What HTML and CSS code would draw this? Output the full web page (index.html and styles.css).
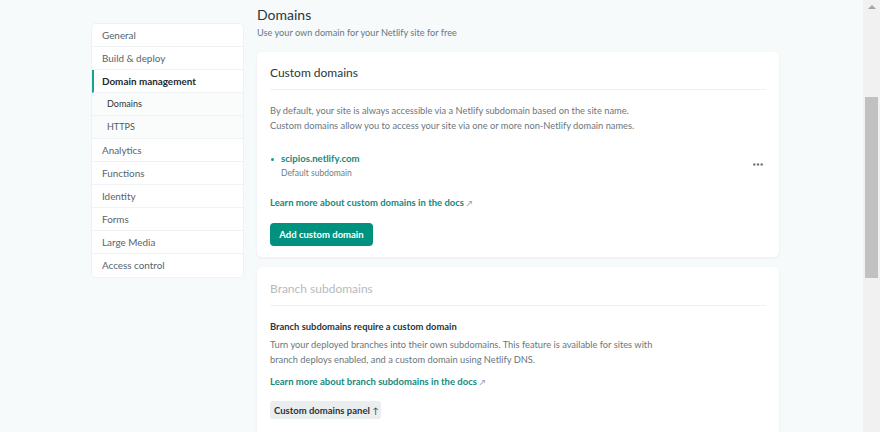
FILE: index.html
```html
<!DOCTYPE html>
<html>
<head>
<meta charset="utf-8">
<link rel="stylesheet" href="styles.css">
</head>
<body>
<div class="page">
  <nav class="sidenav">
    <a class="nav-item">General</a>
    <a class="nav-item">Build &amp; deploy</a>
    <a class="nav-item active">Domain management</a>
    <a class="nav-item sub">Domains</a>
    <a class="nav-item sub light">HTTPS</a>
    <a class="nav-item">Analytics</a>
    <a class="nav-item">Functions</a>
    <a class="nav-item">Identity</a>
    <a class="nav-item">Forms</a>
    <a class="nav-item">Large Media</a>
    <a class="nav-item last">Access control</a>
  </nav>
  <main class="main">
    <h1 class="page-title">Domains</h1>
    <p class="page-sub">Use your own domain for your Netlify site for free</p>

    <section class="card">
      <h2 class="card-title">Custom domains</h2>
      <div class="card-body">
        <p class="text">By default, your site is always accessible via a Netlify subdomain based on the site name.<br>Custom domains allow you to access your site via one or more non-Netlify domain names.</p>
        <div class="domain-row">
          <div class="domain">
            <span class="bullet"></span>
            <div>
              <div class="domain-name">scipios.netlify.com</div>
              <div class="domain-note">Default subdomain</div>
            </div>
          </div>
          <svg class="more" width="10" height="3" viewBox="0 0 10 3"><circle cx="1.3" cy="1.5" r="1.2" fill="#6b757a"/><circle cx="5" cy="1.5" r="1.2" fill="#6b757a"/><circle cx="8.7" cy="1.5" r="1.2" fill="#6b757a"/></svg>
        </div>
        <a class="link">Learn more about custom domains in the docs <span class="arrow">↗</span></a>
        <div><button class="btn-primary">Add custom domain</button></div>
      </div>
    </section>

    <section class="card card-tall">
      <h2 class="card-title muted">Branch subdomains</h2>
      <div class="card-body">
        <h3 class="subhead">Branch subdomains require a custom domain</h3>
        <p class="text">Turn your deployed branches into their own subdomains. This feature is available for sites with<br>branch deploys enabled, and a custom domain using Netlify DNS.</p>
        <a class="link link2">Learn more about branch subdomains in the docs <span class="arrow">↗</span></a>
        <div><button class="btn-secondary">Custom domains panel <span class="up">↑</span></button></div>
      </div>
    </section>
  </main>
</div>
<div class="scrollbar">
  <div class="sb-arrow"></div>
  <div class="sb-thumb"></div>
</div>
</body>
</html>
```
FILE: styles.css
```css
* { box-sizing: border-box; }
html, body { margin: 0; padding: 0; }
body {
  background: #f6fafb;
  font-family: "Lato", "Open Sans", sans-serif;
  color: #2e3a40;
  height: 432px;
  overflow: hidden;
}
.page {
  display: flex;
  align-items: flex-start;
  gap: 14px;
  padding-left: 92px;
  width: 863px;
}
.sidenav {
  margin-top: 24px;
  width: 151px;
  flex-shrink: 0;
  background: #fff;
  border-radius: 4px;
  display: flex;
  flex-direction: column;
  box-shadow: 0 0 0 1px #eef2f3;
}
.nav-item {
  height: 23px;
  line-height: 22px;
  padding-left: 10px;
  font-size: 9.9px;
  color: #58636a;
  border-bottom: 1px solid #f0f3f4;
}
.nav-item.last { border-bottom: none; }
.nav-item.active {
  color: #1f2a30;
  font-weight: 700;
  border-left: 2px solid #14a394;
  padding-left: 8px;
}
.nav-item.sub {
  background: #fafbfb;
  padding-left: 15px;
  font-size: 9px;
  color: #2a353a;
}
.nav-item.sub.light { color: #4e5a60; }

.main {
  width: 522px;
  display: flex;
  flex-direction: column;
}
.page-title {
  margin: 5px 0 0;
  font-size: 14px;
  font-weight: 400;
  color: #2a353b;
  line-height: 19px;
}
.page-sub {
  margin: 2px 0 0;
  font-size: 9.2px;
  color: #6b767c;
  line-height: 14px;
}
.card {
  background: #fff;
  border-radius: 5px;
  box-shadow: 0 1px 3px rgba(20, 40, 50, 0.06);
  padding: 0 13px 11px;
  margin-top: 12px;
}
.card + .card { margin-top: 10px; }
.card-tall { padding-bottom: 24px; }
.card-tall .card-title { padding-top: 13px; }
.card-title {
  margin: 0;
  font-size: 12px;
  font-weight: 400;
  color: #2a353b;
  line-height: 18px;
  padding-top: 12px;
  padding-bottom: 7px;
  border-bottom: 1px solid #eef1f2;
}
.card-title.muted { color: #b5bbbe; }
.card-body {
  padding-top: 13px;
  display: flex;
  flex-direction: column;
}
.text {
  margin: 0;
  font-size: 9.3px;
  line-height: 15px;
  color: #6b767c;
}
.domain-row {
  margin-top: 19px;
  display: flex;
  justify-content: space-between;
  align-items: flex-end;
}
.domain { display: flex; align-items: flex-start; gap: 7px; }
.bullet {
  width: 3px; height: 3px; border-radius: 50%;
  background: #149c8e;
  margin-top: 6px;
  margin-left: 1px;
}
.domain-name {
  font-size: 9.6px; font-weight: 700; color: #15897d; line-height: 14px;
}
.domain-note { font-size: 8.5px; color: #737d83; line-height: 14px; }
.more {
  margin-right: 3px; margin-bottom: 14px;
}
.link {
  margin-top: 16px;
  font-size: 9.5px;
  font-weight: 700;
  color: #15897d;
  line-height: 14px;
}
.arrow { font-size: 8px; color: #8a9498; font-weight: 400; }
.btn-primary {
  margin-top: 13px;
  background: #00917f;
  color: #fff;
  border: none;
  border-radius: 4px;
  font-family: inherit;
  font-size: 9.5px;
  font-weight: 700;
  height: 23px;
  padding: 0 9px;
  width: 103px;
}
.subhead {
  margin: 0 0 3px;
  font-size: 9.4px;
  font-weight: 700;
  color: #2a353b;
  line-height: 15px;
}
.link2 { margin-top: 8px; }
.btn-secondary {
  margin-top: 12px;
  background: #ebeeee;
  color: #2a353b;
  border: none;
  border-radius: 3px;
  font-family: inherit;
  font-size: 9.5px;
  font-weight: 700;
  height: 18px;
  padding: 0 4px;
  width: 111px;
  white-space: nowrap;
}
.up { font-weight: 400; font-size: 8.5px; }
.scrollbar {
  position: fixed;
  top: 0; right: 0;
  width: 17px; height: 432px;
  background: #f1f1f1;
}
.sb-arrow {
  width: 0; height: 0;
  margin: 5px auto 0;
  border-left: 4px solid transparent;
  border-right: 4px solid transparent;
  border-bottom: 4px solid #a3a3a3;
}
.sb-thumb {
  position: absolute;
  left: 2px; right: 2px;
  top: 97px; height: 181px;
  background: #c1c1c1;
}
```
